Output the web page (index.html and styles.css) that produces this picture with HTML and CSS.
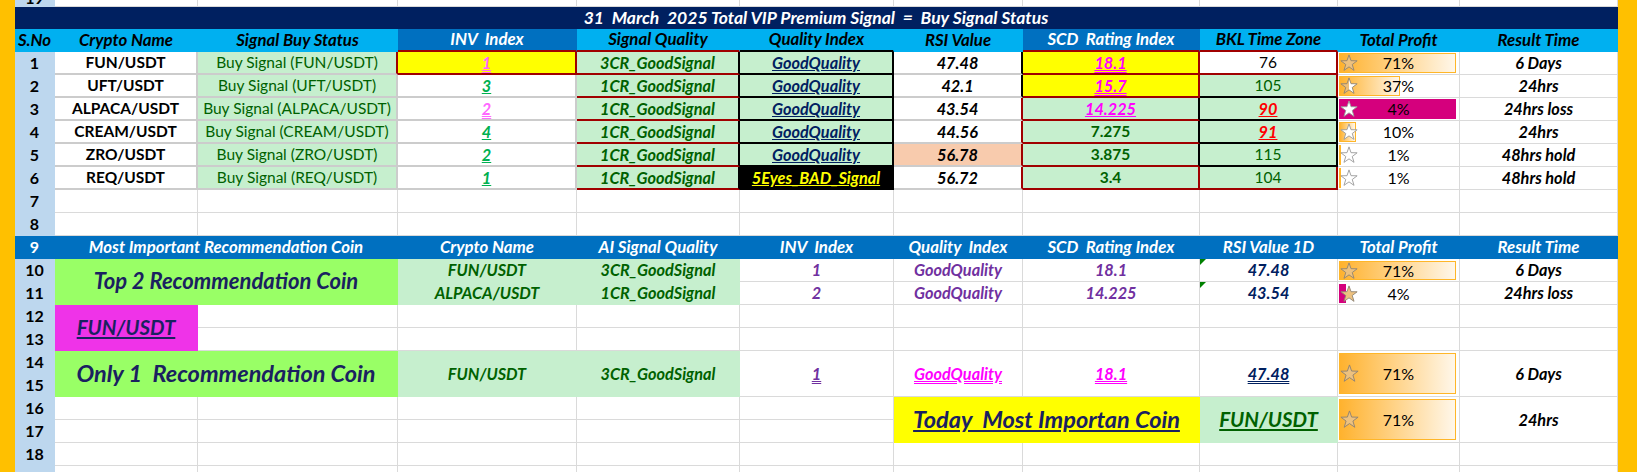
FILE: index.html
```html
<!DOCTYPE html>
<html lang="en">
<head>
<meta charset="utf-8">
<title>VIP Premium Signal</title>
<link rel="stylesheet" href="styles.css">
</head>
<body>
<div class="sheet">
<div class="side l"></div>
<div class="side r"></div>

<!-- partial row 19 -->
<div class="c rh peek"><span>19</span></div>
<div class="c"></div><div class="c"></div><div class="c"></div><div class="c"></div><div class="c"></div>
<div class="c"></div><div class="c"></div><div class="c"></div><div class="c"></div><div class="c"></div>

<!-- title -->
<div class="c title">31  March  2025 Total VIP Premium Signal  =  Buy Signal Status</div>

<!-- header -->
<div class="c hd">S.No</div>
<div class="c hd">Crypto Name</div>
<div class="c hd">Signal Buy Status</div>
<div class="c hd blue hbr">INV  Index</div>
<div class="c hd hbr">Signal Quality</div>
<div class="c hd hbk">Quality Index</div>
<div class="c hd">RSI Value</div>
<div class="c hd blue hbr">SCD  Rating Index</div>
<div class="c hd hbr">BKL Time Zone</div>
<div class="c hd">Total Profit</div>
<div class="c hd">Result Time</div>

<!-- row 1 -->
<div class="c rh">1</div>
<div class="c t1 b">FUN/USDT</div>
<div class="c t1 gr dg rr">Buy Signal (FUN/USDT)</div>
<div class="c t1 yl rr rb b i uu pk">1</div>
<div class="c t1 gr kr rb b i dg">3CR_GoodSignal</div>
<div class="c t1 gr kr kb b i u nv">GoodQuality</div>
<div class="c t1 kr b i">47.48</div>
<div class="c t1 yl rr rb b i uu mg">18.1</div>
<div class="c t1 rr rb">76</div>
<div class="c bc"><div class="bar" style="width:98%"></div><svg class="star" viewBox="0 0 20 20"><polygon class="sf" points="10,1 12.23,7.43 19.03,7.56 13.61,11.67 15.58,18.19 10,14.3 4.42,18.19 6.39,11.67 0.97,7.56 7.77,7.43"/></svg><span class="pct">71%</span></div>
<div class="c b i">6 Days</div>

<!-- row 2 -->
<div class="c rh">2</div>
<div class="c t1 b">UFT/USDT</div>
<div class="c t1 gr dg">Buy Signal (UFT/USDT)</div>
<div class="c t1 b i u gn">3</div>
<div class="c t1 gr kr rb b i dg">1CR_GoodSignal</div>
<div class="c t1 gr kr kb b i u nv">GoodQuality</div>
<div class="c t1 kr b i">42.1</div>
<div class="c t1 yl rr rb b i uu mg">15.7</div>
<div class="c t1 gr rr kb dg">105</div>
<div class="c bc"><div class="bar" style="width:51%"></div><svg class="star" viewBox="0 0 20 20"><defs><linearGradient id="half" x1="0" x2="1" y1="0" y2="0"><stop offset="50%" stop-color="#EDBE78"/><stop offset="50%" stop-color="#ffffff"/></linearGradient></defs><polygon class="sh" points="10,1 12.23,7.43 19.03,7.56 13.61,11.67 15.58,18.19 10,14.3 4.42,18.19 6.39,11.67 0.97,7.56 7.77,7.43"/></svg><span class="pct">37%</span></div>
<div class="c b i">24hrs</div>

<!-- row 3 -->
<div class="c rh">3</div>
<div class="c t1 b">ALPACA/USDT</div>
<div class="c t1 gr dg">Buy Signal (ALPACA/USDT)</div>
<div class="c t1 b i uu pk">2</div>
<div class="c t1 gr kr rb b i dg">1CR_GoodSignal</div>
<div class="c t1 gr kr kb b i u nv">GoodQuality</div>
<div class="c t1 rr b i">43.54</div>
<div class="c t1 gr kr rb b i u mg">14.225</div>
<div class="c t1 gr kr kb b i u rd">90</div>
<div class="c bc"><div class="bar m" style="width:98%"></div><svg class="star" viewBox="0 0 20 20"><polygon class="se" points="10,1 12.23,7.43 19.03,7.56 13.61,11.67 15.58,18.19 10,14.3 4.42,18.19 6.39,11.67 0.97,7.56 7.77,7.43"/></svg><span class="pct">4%</span></div>
<div class="c b i">24hrs loss</div>

<!-- row 4 -->
<div class="c rh">4</div>
<div class="c t1 b">CREAM/USDT</div>
<div class="c t1 gr dg">Buy Signal (CREAM/USDT)</div>
<div class="c t1 b i u gn">4</div>
<div class="c t1 gr kr rb b i dg">1CR_GoodSignal</div>
<div class="c t1 gr kr kb b i u nv">GoodQuality</div>
<div class="c t1 rr b i">44.56</div>
<div class="c t1 gr kr rb b dg">7.275</div>
<div class="c t1 gr kr kb b i u rd">91</div>
<div class="c bc"><div class="bar" style="width:14%"></div><svg class="star" viewBox="0 0 20 20"><polygon class="se" points="10,1 12.23,7.43 19.03,7.56 13.61,11.67 15.58,18.19 10,14.3 4.42,18.19 6.39,11.67 0.97,7.56 7.77,7.43"/></svg><span class="pct">10%</span></div>
<div class="c b i">24hrs</div>

<!-- row 5 -->
<div class="c rh">5</div>
<div class="c t1 b">ZRO/USDT</div>
<div class="c t1 gr dg">Buy Signal (ZRO/USDT)</div>
<div class="c t1 b i u gn">2</div>
<div class="c t1 gr kr rb b i dg">1CR_GoodSignal</div>
<div class="c t1 gr kr kb b i u nv">GoodQuality</div>
<div class="c t1 pe rr b i">56.78</div>
<div class="c t1 gr kr rb b dg">3.875</div>
<div class="c t1 gr kr kb dg">115</div>
<div class="c bc"><div class="bar" style="width:2%"></div><svg class="star" viewBox="0 0 20 20"><polygon class="se" points="10,1 12.23,7.43 19.03,7.56 13.61,11.67 15.58,18.19 10,14.3 4.42,18.19 6.39,11.67 0.97,7.56 7.77,7.43"/></svg><span class="pct">1%</span></div>
<div class="c b i">48hrs hold</div>

<!-- row 6 -->
<div class="c rh">6</div>
<div class="c t1 b">REQ/USDT</div>
<div class="c t1 gr dg">Buy Signal (REQ/USDT)</div>
<div class="c t1 b i u gn">1</div>
<div class="c t1 gr kr rb b i dg">1CR_GoodSignal</div>
<div class="c t1 bk kr kb b i u yt">5Eyes_BAD_Signal</div>
<div class="c t1 rr b i">56.72</div>
<div class="c t1 gr rr rb b dg">3.4</div>
<div class="c t1 gr rr rb dg">104</div>
<div class="c bc"><div class="bar" style="width:2%"></div><svg class="star" viewBox="0 0 20 20"><polygon class="se" points="10,1 12.23,7.43 19.03,7.56 13.61,11.67 15.58,18.19 10,14.3 4.42,18.19 6.39,11.67 0.97,7.56 7.77,7.43"/></svg><span class="pct">1%</span></div>
<div class="c b i">48hrs hold</div>

<!-- row 7 -->
<div class="c rh">7</div>
<div class="c"></div><div class="c"></div><div class="c"></div><div class="c"></div><div class="c"></div>
<div class="c"></div><div class="c"></div><div class="c"></div><div class="c"></div><div class="c"></div>

<!-- row 8 -->
<div class="c rh">8</div>
<div class="c"></div><div class="c"></div><div class="c"></div><div class="c"></div><div class="c"></div>
<div class="c"></div><div class="c"></div><div class="c"></div><div class="c"></div><div class="c"></div>

<!-- row 9 -->
<div class="c hd2 num">9</div>
<div class="c hd2 span2">Most Important Recommendation Coin</div>
<div class="c hd2">Crypto Name</div>
<div class="c hd2">AI Signal Quality</div>
<div class="c hd2">INV  Index</div>
<div class="c hd2">Quality  Index</div>
<div class="c hd2">SCD  Rating Index</div>
<div class="c hd2">RSI Value 1D</div>
<div class="c hd2">Total Profit</div>
<div class="c hd2">Result Time</div>

<!-- row 10 -->
<div class="c rh">10</div>
<div class="c lime nb span2 rows2 top2 b i nv2">Top 2 Recommendation Coin</div>
<div class="c gr nb b i dg">FUN/USDT</div>
<div class="c gr nb b i dg">3CR_GoodSignal</div>
<div class="c b i pu">1</div>
<div class="c b i pu">GoodQuality</div>
<div class="c b i pu">18.1</div>
<div class="c tri b i nv">47.48</div>
<div class="c bc sm"><div class="bar" style="width:98%"></div><svg class="star" viewBox="0 0 20 20"><polygon class="sf" points="10,1 12.23,7.43 19.03,7.56 13.61,11.67 15.58,18.19 10,14.3 4.42,18.19 6.39,11.67 0.97,7.56 7.77,7.43"/></svg><span class="pct">71%</span></div>
<div class="c b i">6 Days</div>

<!-- row 11 -->
<div class="c rh">11</div>
<div class="c gr nb b i dg">ALPACA/USDT</div>
<div class="c gr nb b i dg">1CR_GoodSignal</div>
<div class="c b i pu">2</div>
<div class="c b i pu">GoodQuality</div>
<div class="c b i pu">14.225</div>
<div class="c tri b i nv">43.54</div>
<div class="c bc sm"><div class="bar m" style="width:6%"></div><svg class="star" viewBox="0 0 20 20"><polygon class="sf" points="10,1 12.23,7.43 19.03,7.56 13.61,11.67 15.58,18.19 10,14.3 4.42,18.19 6.39,11.67 0.97,7.56 7.77,7.43"/></svg><span class="pct">4%</span></div>
<div class="c b i">24hrs loss</div>

<!-- row 12 -->
<div class="c rh">12</div>
<div class="c mgc nb rows2 mid b i u nv2">FUN/USDT</div>
<div class="c"></div><div class="c"></div><div class="c"></div><div class="c"></div><div class="c"></div>
<div class="c"></div><div class="c"></div><div class="c"></div><div class="c"></div>

<!-- row 13 -->
<div class="c rh">13</div>
<div class="c"></div><div class="c"></div><div class="c"></div><div class="c"></div><div class="c"></div>
<div class="c"></div><div class="c"></div><div class="c"></div><div class="c"></div>

<!-- row 14-15 -->
<div class="c rh">14</div>
<div class="c lime nb span2 rows2 big b i nv2">Only 1  Recommendation Coin</div>
<div class="c gr nb rows2 b i dg">FUN/USDT</div>
<div class="c gr nb rows2 b i dg">3CR_GoodSignal</div>
<div class="c rows2 b i uu pu">1</div>
<div class="c rows2 b i uu mg">GoodQuality</div>
<div class="c rows2 b i uu mg">18.1</div>
<div class="c rows2 b i uu nv">47.48</div>
<div class="c bc tall rows2"><div class="bar" style="width:98%"></div><svg class="star" viewBox="0 0 20 20"><polygon class="sf" points="10,1 12.23,7.43 19.03,7.56 13.61,11.67 15.58,18.19 10,14.3 4.42,18.19 6.39,11.67 0.97,7.56 7.77,7.43"/></svg><span class="pct">71%</span></div>
<div class="c rows2 b i">6 Days</div>
<div class="c rh">15</div>

<!-- row 16-17 -->
<div class="c rh">16</div>
<div class="c"></div><div class="c"></div><div class="c"></div><div class="c"></div><div class="c"></div>
<div class="c yl nb span2 rows2 big b i u nv2">Today  Most Importan Coin</div>
<div class="c gr nb rows2 mid b i u dg">FUN/USDT</div>
<div class="c bc tall rows2"><div class="bar" style="width:98%"></div><svg class="star" viewBox="0 0 20 20"><polygon class="sf" points="10,1 12.23,7.43 19.03,7.56 13.61,11.67 15.58,18.19 10,14.3 4.42,18.19 6.39,11.67 0.97,7.56 7.77,7.43"/></svg><span class="pct">71%</span></div>
<div class="c rows2 b i">24hrs</div>
<div class="c rh">17</div>
<div class="c"></div><div class="c"></div><div class="c"></div><div class="c"></div><div class="c"></div>

<!-- row 18 -->
<div class="c rh">18</div>
<div class="c"></div><div class="c"></div><div class="c"></div><div class="c"></div><div class="c"></div>
<div class="c"></div><div class="c"></div><div class="c"></div><div class="c"></div><div class="c"></div>

<!-- partial row 19 -->
<div class="c rh last"></div>
<div class="c last"></div><div class="c last"></div><div class="c last"></div><div class="c last"></div><div class="c last"></div>
<div class="c last"></div><div class="c last"></div><div class="c last"></div><div class="c last"></div><div class="c last"></div>
</div>
</body>
</html>
```

FILE: styles.css
```css
* { box-sizing: border-box; }
html, body { margin: 0; padding: 0; background: #fff; }
body {
  width: 1637px;
  height: 472px;
  overflow: hidden;
  font-family: Lato, "Liberation Sans", sans-serif;
  font-size: 15.5px;
  color: #000;
}
.sheet {
  display: grid;
  grid-template-columns: 15px 40px 143px 200px 179px 163px 154px 129px 177px 138px 122px 158px 19px;
  grid-template-rows: 7px 22px 23px repeat(18, 23px) 6px;
  height: 472px;
}
.side { background: #FFC000; grid-row: 1 / -1; }
.side.l { grid-column: 1; }
.side.r { grid-column: 13; }

.c {
  display: flex;
  align-items: center;
  justify-content: center;
  white-space: pre;
  overflow: hidden;
  min-width: 0;
  line-height: 1.1;
  border-right: 1px solid #DADADA;
  border-bottom: 1px solid #DADADA;
}
.last { border-bottom: 0; }
.rh { background: #BDD7EE; border-color: transparent; font-weight: 700; font-size: 16px; }
.peek { align-items: flex-start; }
.peek span { line-height: 23px; margin-top: -14px; }

.title {
  grid-column: span 11;
  background: #002060;
  border-color: transparent;
  color: #fff;
  font-weight: 700;
  font-style: italic;
  font-size: 17.5px;
}
.hd { background: #00B0F0; border-color: transparent; font-weight: 700; font-style: italic; font-size: 16.8px; }
.hd.blue { background: #0070C0; color: #fff; }
.hd2 { background: #0070C0; color: #fff; border-color: transparent; font-weight: 700; font-style: italic; font-size: 16.8px; }
.hd2.num { font-style: normal; font-size: 16px; }
.span2 { grid-column: span 2; }
.rows2 { grid-row: span 2; }

.t1 { border-right: 2px solid #CCCCCC; border-bottom: 2px solid #CCCCCC; }
.hbr { border-bottom: 2px solid #A00000; }
.hbk { border-bottom: 2px solid #000; }

.gr { background: #C6EFCE; }
.yl { background: #FFFF00; }
.pe { background: #F8CBAD; }
.bk { background: #000; }
.lime { background: #99FF66; }
.mgc { background: #EF33E8; }
.nb { border-color: transparent; }
.rr { border-right-color: #A00000; }
.rb { border-bottom-color: #A00000; }
.kr { border-right-color: #000; }
.kb { border-bottom-color: #000; }

.b { font-weight: 700; }
.i { font-style: italic; }
.b.i { font-size: 16.3px; }
.u { text-decoration: underline; }
.uu { text-decoration: underline double; }
.dg { color: #006100; }
.nv { color: #002060; }
.nv2 { color: #1A2160; }
.pk { color: #FF66FF; }
.gn { color: #00B050; }
.mg { color: #FF00FF; }
.rd { color: #FF0000; }
.pu { color: #7030A0; }
.yt { color: #FFFF00; }
.c.big { font-size: 23.5px; }
.c.top2 { font-size: 22px; }
.c.mid { font-size: 20.5px; }

.tri { position: relative; }
.tri::before {
  content: "";
  position: absolute;
  left: 0;
  top: 0;
  border-top: 6px solid #008000;
  border-right: 6px solid transparent;
}

.bc {
  display: grid;
  grid-template-columns: minmax(0, 1fr);
  grid-template-rows: minmax(0, 1fr);
  padding: 1px;
  place-items: center;
}
.bc > * { grid-area: 1 / 1; }
.bc.sm { padding: 2px 1px 1px 1px; }
.bc.tall { padding: 2px 1px 2px 1px; }
.bar {
  justify-self: start;
  align-self: stretch;
  border: 1px solid #FFB628;
  background: linear-gradient(to right, #FFB22E, #FFF7EA);
}
.bar.m { background: #D5007D; border-color: #D5007D; }
.star { justify-self: start; width: 18px; height: 18px; margin-left: 1px; }
.bc.tall .star { width: 19px; height: 19px; }
.sf { fill: #EDC17F; stroke: #8F8374; stroke-width: 1; }
.sh { fill: url(#half); stroke: #8F8374; stroke-width: 1; }
.se { fill: #fff; stroke: #9A9A9A; stroke-width: 1; }
.pct { font-weight: 400; font-size: 16px; }
```
